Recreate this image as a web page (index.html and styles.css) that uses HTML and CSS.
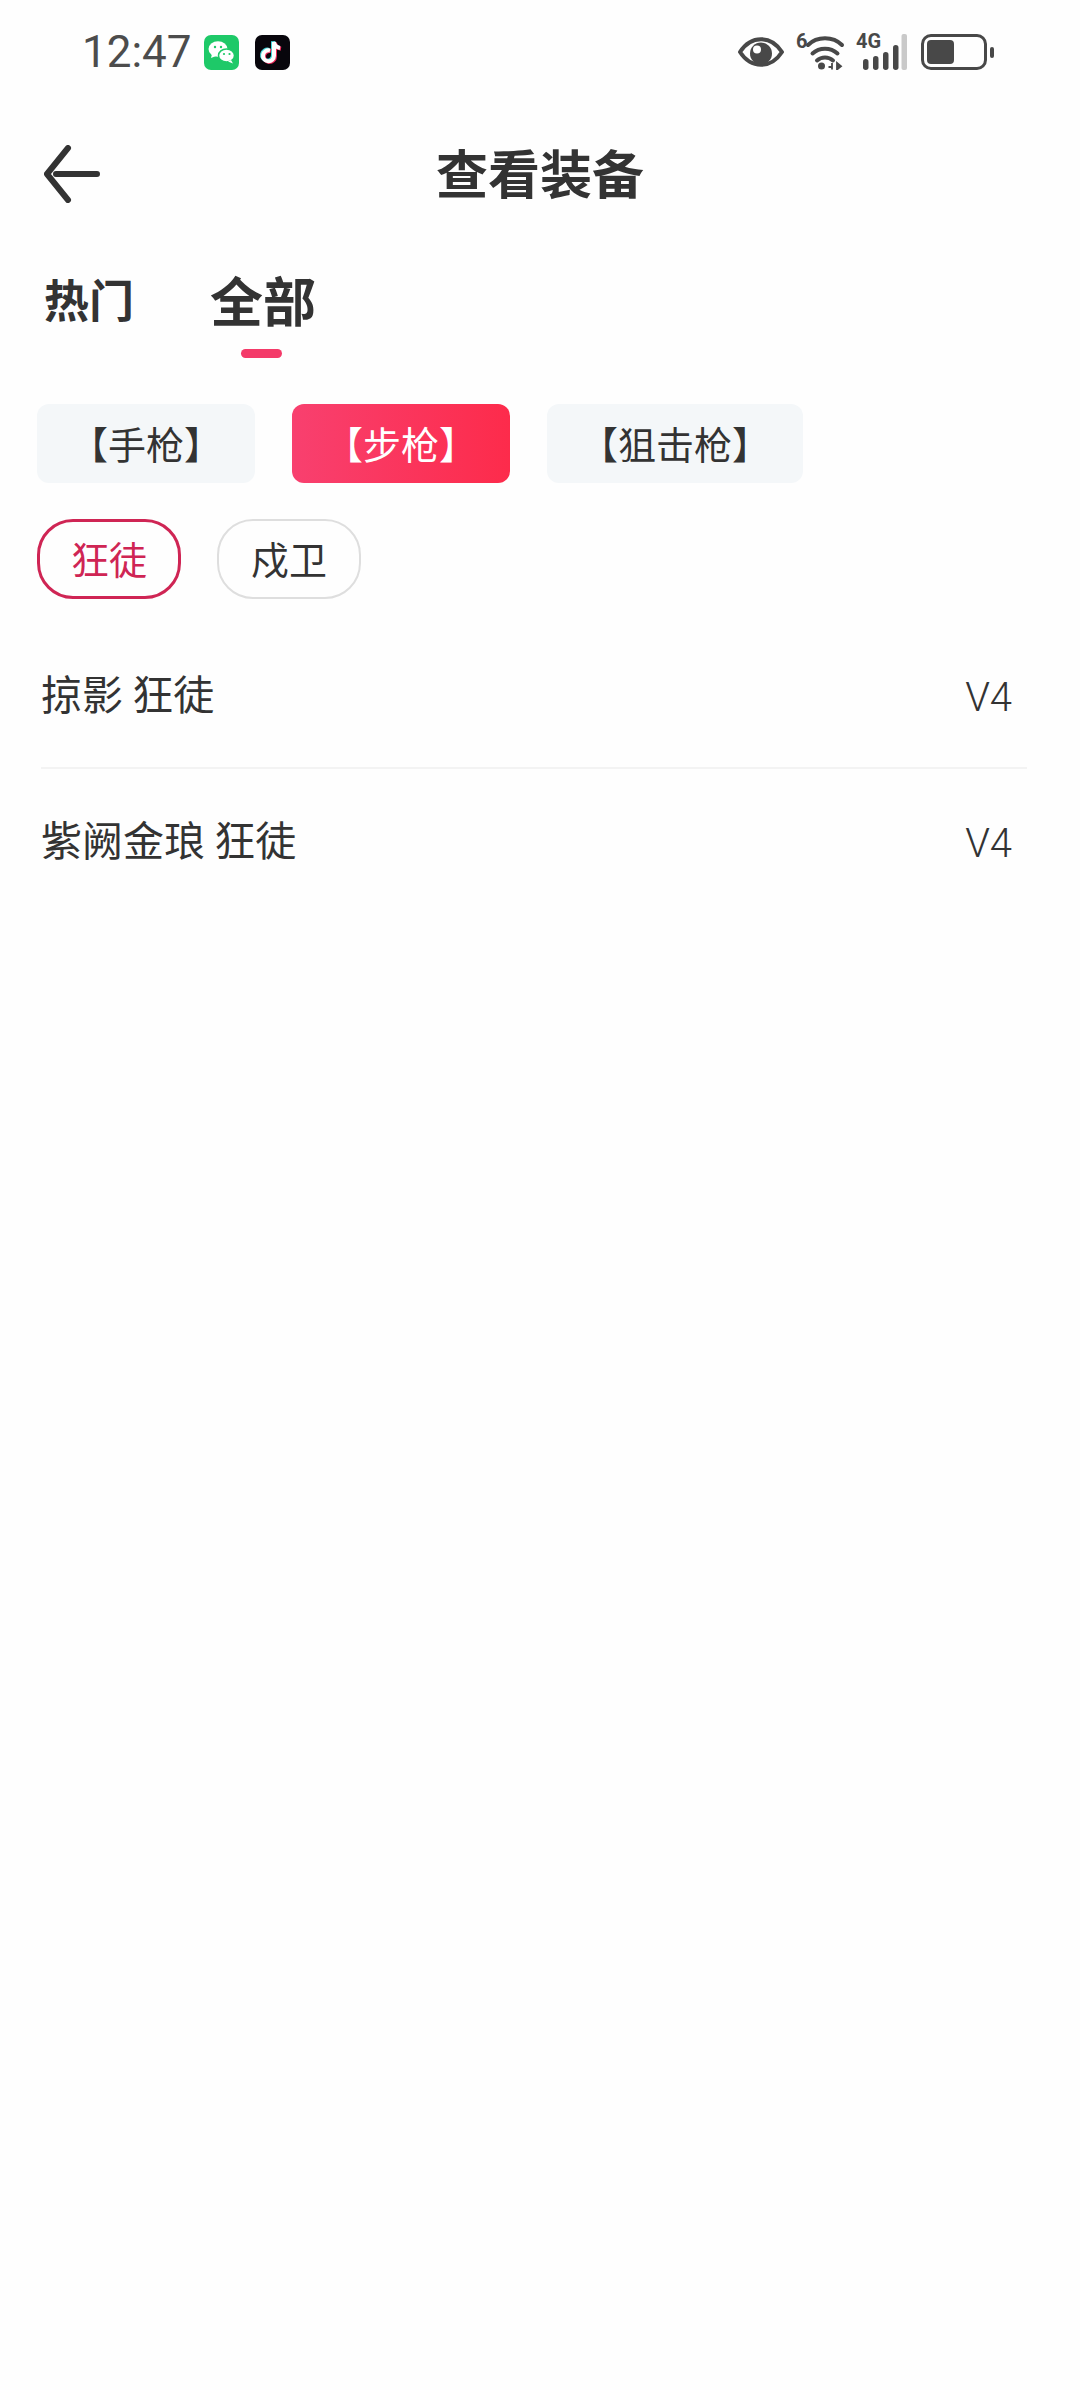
FILE: index.html
```html
<!DOCTYPE html>
<html lang="zh-CN">
<head>
  <meta charset="UTF-8">
  <title>查看装备</title>
  <link rel="stylesheet" href="styles.css">
</head>
<body>

  <div class="status-bar">
    <div class="status-left">
      <span class="clock">12:47</span>
      <svg class="app-icon" viewBox="0 0 35 35">
        <rect width="35" height="35" rx="7" fill="#1ec968"/>
        <ellipse cx="14" cy="14" rx="9.5" ry="7.8" fill="#fff"/>
        <path d="M8 19l-1 4 5-2z" fill="#fff"/>
        <ellipse cx="22.5" cy="20.5" rx="8" ry="6.6" fill="#fff" stroke="#1ec968" stroke-width="1.5"/>
        <path d="M27 25l2 3.5-5-2z" fill="#fff"/>
        <circle cx="11" cy="12" r="1.2" fill="#1ec968"/>
        <circle cx="17" cy="12" r="1.2" fill="#1ec968"/>
        <circle cx="20" cy="19" r="1.1" fill="#1ec968"/>
        <circle cx="25.5" cy="19" r="1.1" fill="#1ec968"/>
      </svg>
      <svg class="app-icon tiktok" viewBox="0 0 35 35">
        <rect width="35" height="35" rx="7" fill="#08060c"/>
        <g fill="none" stroke-width="4">
          <path d="M15 15.500a5.500 5.500 0 1 0 4 5.300V7c.5 3.500 3 5.500 6 6" stroke="#45d6dc" transform="translate(-1 -.7)"/>
          <path d="M15 15.500a5.500 5.500 0 1 0 4 5.300V7c.5 3.500 3 5.500 6 6" stroke="#f0285a" transform="translate(1 .7)"/>
          <path d="M15 15.500a5.500 5.500 0 1 0 4 5.300V7c.5 3.500 3 5.500 6 6" stroke="#fff"/>
        </g>
      </svg>
    </div>
    <div class="status-right">
      <svg class="eye" viewBox="0 0 46 30">
        <path d="M2 15C7.500 6.500 14 2.200 23 2.200S38.500 6.500 44 15c-5.500 8.500-12 12.800-21 12.800S7.500 23.500 2 15z" fill="none" stroke="#484848" stroke-width="4" stroke-linejoin="round"/>
        <circle cx="23" cy="16.500" r="11" fill="#484848"/>
        <circle cx="19" cy="12.500" r="4" fill="#fff"/>
      </svg>
      <div class="net">
        <span class="net-label">6</span>
        <svg class="wifi" viewBox="0 0 40 36">
          <path d="M3 11C12 2 28 2 37 11" fill="none" stroke="#484848" stroke-width="4" stroke-linecap="round"/>
          <path d="M7.500 19.500C14.500 13 25.500 13 32.500 19.500" fill="none" stroke="#484848" stroke-width="4" stroke-linecap="round"/>
          <path d="M12 26.500c4.500-4 11.500-4 16 0" fill="none" stroke="#484848" stroke-width="4" stroke-linecap="round"/>
          <circle cx="16.500" cy="32" r="3.500" fill="#484848"/>
          <path d="M27 29v6.500M23.500 33h3.500M32 29v6.500l4-3.200z" fill="#484848" stroke="#484848" stroke-width="1.800"/>
        </svg>
      </div>
      <div class="signal">
        <span class="signal-label">4G</span>
        <svg class="bars" viewBox="0 0 44 36">
          <rect x="0" y="25" width="5.500" height="11" rx="2.700" fill="#484848"/>
          <rect x="10" y="22" width="5.500" height="14" rx="2.700" fill="#484848"/>
          <rect x="20" y="18" width="5.500" height="18" rx="2.700" fill="#484848"/>
          <rect x="30" y="11" width="5.500" height="25" rx="2.700" fill="#484848"/>
          <rect x="38.500" y="0" width="5.500" height="36" rx="2" fill="#c9c9c9"/>
        </svg>
      </div>
      <div class="battery">
        <div class="battery-body"><div class="battery-fill"></div></div>
        <div class="battery-nub"></div>
      </div>
    </div>
  </div>

  <div class="nav-bar">
    <svg class="back" viewBox="0 0 56 58">
      <path d="M24 3L3 29l21 26M12 29h41" fill="none" stroke="#333" stroke-width="6" stroke-linecap="round" stroke-linejoin="round"/>
    </svg>
    <h1 class="page-title">查看装备</h1>
  </div>

  <div class="tabs">
    <div class="tab">热门</div>
    <div class="tab active">全部</div>
  </div>

  <div class="chips">
    <div class="chip">【手枪】</div>
    <div class="chip selected">【步枪】</div>
    <div class="chip">【狙击枪】</div>
  </div>

  <div class="pills">
    <div class="pill selected">狂徒</div>
    <div class="pill">戍卫</div>
  </div>

  <ul class="gear-list">
    <li class="gear-row"><span class="gear-name">掠影 狂徒</span><span class="version">V4</span></li>
    <li class="gear-row"><span class="gear-name">紫阙金琅 狂徒</span><span class="version">V4</span></li>
  </ul>

</body>
</html>
```

FILE: styles.css
```css
/* Base */
* {
  margin: 0;
  padding: 0;
  box-sizing: border-box;
}

body {
  width: 1080px;
  height: 2390px;
  background-color: #fefefe;
  color: #333;
  font-family: "Noto Sans CJK SC", "Noto Sans", sans-serif;
  overflow: hidden;
}

/* Status bar */
.status-bar {
  height: 104px;
  padding: 0 86px 0 82px;
  display: flex;
  align-items: center;
  justify-content: space-between;
}

.status-left {
  display: flex;
  align-items: center;
}

.clock {
  font-family: "Roboto", sans-serif;
  font-size: 44px;
  color: #4c4c4c;
  margin-right: 12px;
}

.app-icon {
  width: 35px;
  height: 35px;
}

.tiktok {
  margin-left: 16px;
}

.status-right {
  display: flex;
  align-items: center;
}

.eye {
  width: 46px;
  height: 30px;
  margin-right: 12px;
}

.net, .signal {
  position: relative;
  height: 36px;
}

.net {
  width: 49px;
  margin-right: 11px;
}

.signal {
  width: 51px;
  margin-right: 14px;
}

.net-label, .signal-label {
  position: absolute;
  top: -3px;
  left: 0;
  font-family: "Roboto", sans-serif;
  font-size: 20px;
  font-weight: 700;
  line-height: 20px;
  color: #484848;
}

.wifi {
  position: absolute;
  right: 0;
  top: 0;
  width: 40px;
  height: 36px;
}

.bars {
  position: absolute;
  right: 0;
  top: 0;
  width: 44px;
  height: 36px;
}

.battery {
  display: flex;
  align-items: center;
}

.battery-body {
  width: 66px;
  height: 36px;
  border: 3px solid #484848;
  border-radius: 10px;
  padding: 3px;
}

.battery-fill {
  width: 27px;
  height: 100%;
  background-color: #484848;
  border-radius: 4px;
}

.battery-nub {
  width: 4px;
  height: 11px;
  margin-left: 3px;
  background-color: #484848;
  border-radius: 2px;
}

/* Nav bar */
.nav-bar {
  position: relative;
  height: 140px;
  padding-bottom: 6px;
  display: flex;
  align-items: center;
  justify-content: center;
}

.back {
  position: absolute;
  left: 44px;
  top: 41px;
  width: 56px;
  height: 58px;
}

.page-title {
  font-size: 52px;
  font-weight: 700;
  color: #333;
}

/* Tabs */
.tabs {
  height: 160px;
  padding-left: 44px;
  display: flex;
  align-items: flex-start;
  gap: 76px;
}

.tab {
  position: relative;
  font-size: 45px;
  font-weight: 700;
  line-height: 60px;
  margin-top: 25px;
}

.tab.active {
  font-size: 53px;
  line-height: 70px;
  margin-top: 20px;
}

.tab.active::after {
  content: "";
  position: absolute;
  left: 31px;
  top: 85px;
  width: 41px;
  height: 9px;
  border-radius: 5px;
  background-color: #f43a69;
}

/* Filter chips */
.chips {
  padding-left: 37px;
  display: flex;
  gap: 37px;
}

.chip {
  height: 79px;
  padding: 0 33px;
  border-radius: 12px;
  background-color: #f4f7f9;
  font-size: 38px;
  line-height: 77px;
  color: #333;
}

.chip.selected {
  background: linear-gradient(to right, #f8406f, #fd2b4b);
  color: #fff;
}

.pills {
  margin-top: 36px;
  padding-left: 37px;
  display: flex;
  gap: 36px;
}

.pill {
  height: 80px;
  padding: 0 32px;
  border: 2px solid #dedede;
  border-radius: 36px;
  font-size: 38px;
  line-height: 74px;
  color: #333;
}

.pill.selected {
  padding: 0 31px;
  border: 3px solid #cf2554;
  color: #cf2554;
  line-height: 72px;
}

/* List */
.gear-list {
  list-style: none;
  margin: 23px 53px 0 41px;
}

.gear-row {
  height: 145px;
  padding-right: 15px;
  display: flex;
  align-items: center;
  justify-content: space-between;
  font-size: 41px;
  color: #333;
}

.gear-row + .gear-row {
  border-top: 2px solid #f3f3f3;
}

.gear-name {
  margin-bottom: 6px;
}

.version {
  margin-top: 6px;
  font-family: "Roboto", sans-serif;
  font-size: 40px;
  font-weight: 300;
}
```
